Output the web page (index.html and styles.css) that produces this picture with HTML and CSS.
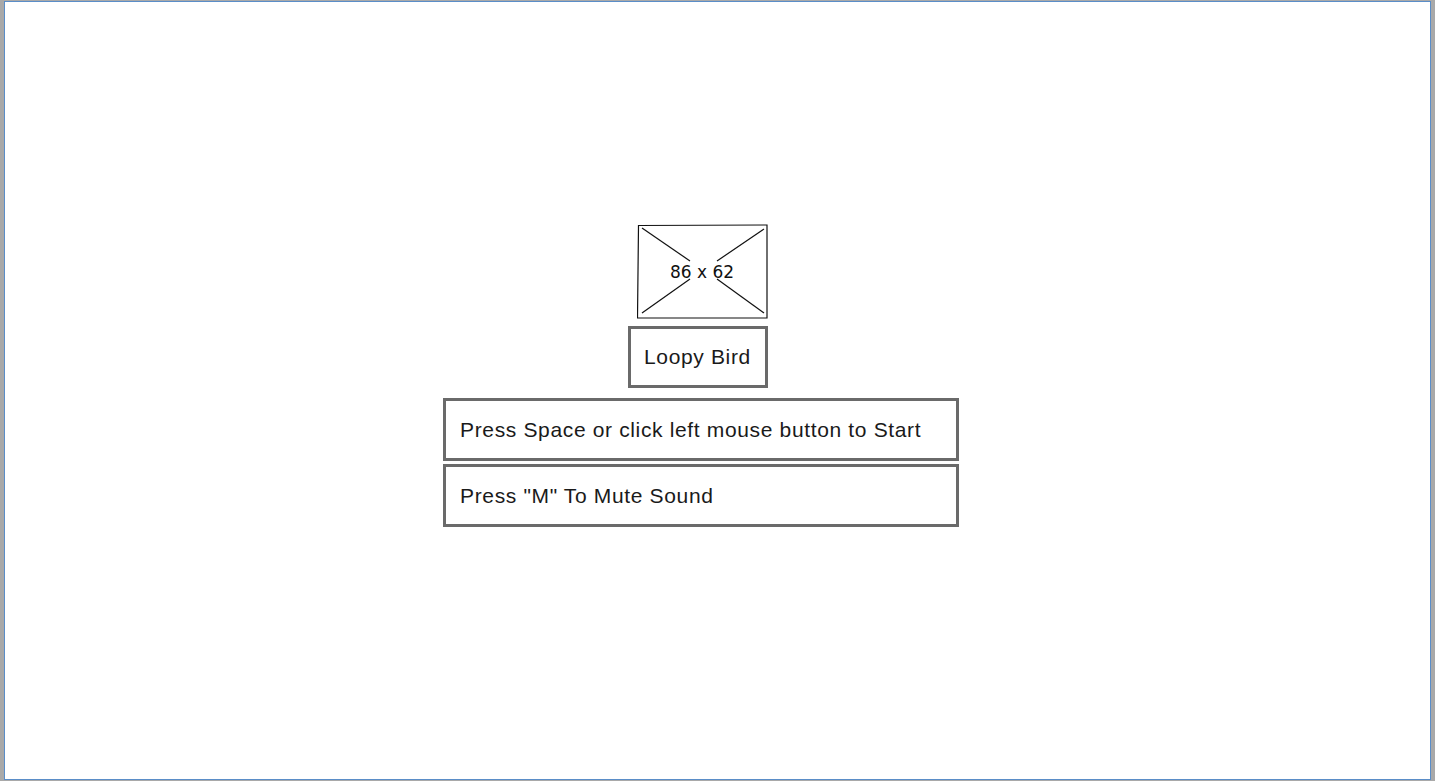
FILE: index.html
```html
<!DOCTYPE html>
<html>
<head>
<meta charset="utf-8">
<link rel="stylesheet" href="styles.css">
</head>
<body>
<div class="frame">
  <div class="canvas">
    <div class="stack">
      <div class="placeholder">
        <svg width="131" height="95" viewBox="0 0 131 95">
          <path d="M1.5 1.5 L130 1 L130 94 L0.5 94 Z" fill="none" stroke="#111" stroke-width="1.2"/>
          <line x1="5" y1="4" x2="53" y2="37" stroke="#111" stroke-width="1.2"/>
          <line x1="127" y1="5" x2="80" y2="37" stroke="#111" stroke-width="1.2"/>
          <line x1="5" y1="89" x2="53" y2="55" stroke="#111" stroke-width="1.2"/>
          <line x1="127" y1="89" x2="80" y2="55" stroke="#111" stroke-width="1.2"/>
          <text x="65" y="54" text-anchor="middle" class="ph-text">86 x 62</text>
        </svg>
      </div>
      <div class="box title">Loopy Bird</div>
      <div class="box wide first">Press Space or click left mouse button to Start</div>
      <div class="box wide">Press "M" To Mute Sound</div>
    </div>
  </div>
</div>
</body>
</html>
```

FILE: styles.css
```css
html, body {
  margin: 0;
  padding: 0;
}
body {
  width: 1435px;
  height: 781px;
  background: #a9a9a9;
  font-family: "Liberation Sans", Arial, sans-serif;
}
.frame {
  box-sizing: border-box;
  width: 1435px;
  height: 781px;
  padding: 1px 4px 1px 4px;
}
.canvas {
  box-sizing: border-box;
  width: 100%;
  height: 100%;
  background: #fff;
  border: 1px solid #5a8dc8;
  padding-top: 222px;
  padding-left: 438px;
}
.stack {
  display: flex;
  flex-direction: column;
  align-items: flex-start;
  width: 516px;
}
.placeholder {
  margin-left: 194px;
  height: 95px;
  line-height: 0;
}
.ph-text {
  font-family: "DejaVu Sans", sans-serif;
  font-size: 17px;
  fill: #111;
}
.box {
  box-sizing: border-box;
  border: 3px solid #6a6a6a;
  background: #fff;
  color: #1a1a1a;
  font-size: 21px;
  letter-spacing: 0.65px;
  line-height: 24px;
  display: flex;
  align-items: center;
  white-space: nowrap;
}
.title {
  margin-left: 185px;
  margin-top: 7px;
  width: 140px;
  height: 62px;
  padding-left: 13px;
}
.wide {
  width: 516px;
  height: 63px;
  padding-left: 14px;
  margin-top: 3px;
}
.wide.first {
  margin-top: 10px;
}
```
